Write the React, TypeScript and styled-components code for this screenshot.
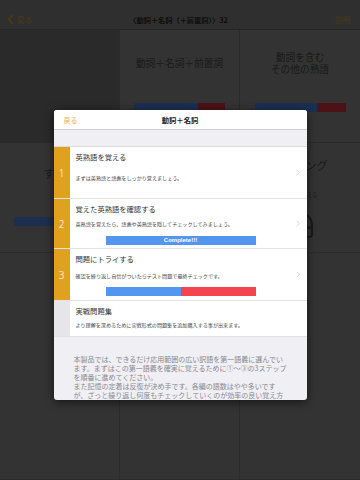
import styled, { createGlobalStyle } from "styled-components";
import { Headphones } from "lucide-react";

const GlobalStyle = createGlobalStyle`
  *, *::before, *::after { box-sizing: border-box; }
  body {
    margin: 0;
    background: #333;
    font-family: "Noto Sans CJK JP", "Noto Sans", sans-serif;
  }
`;

const JP = `"Noto Sans CJK JP", "Noto Sans", sans-serif`;

const steps = [
  {
    no: "1",
    title: "英熟語を覚える",
    desc: "まずは英熟語と語義をしっかり覚えましょう。",
    h: 52,
    gap: 11,
  },
  {
    no: "2",
    title: "覚えた英熟語を確認する",
    desc: "英熟語を覚えたら、語義や英熟語を隠してチェックしてみましょう。",
    h: 50,
    gap: 5,
    bar: "complete",
  },
  {
    no: "3",
    title: "問題にトライする",
    desc: "確認を繰り返し自信がついたらテスト問題で最終チェックです。",
    h: 52,
    gap: 7,
    bar: "split",
  },
  {
    no: "",
    title: "実戦問題集",
    desc: "より理解を深めるために実戦形式の問題集を追加購入する事が出来ます。",
    h: 36,
    gap: 4,
  },
];

const Chevron = ({ color, w, h }: { color: string; w: number; h: number }) => (
  <svg width={w} height={h} viewBox="0 0 6 10" fill="none">
    <polyline points="1,1 5,5 1,9" stroke={color} strokeWidth="1.1" />
  </svg>
);

const BackChevron = () => (
  <svg width="7" height="11" viewBox="0 0 7 11" fill="none">
    <polyline points="6,1 1.5,5.5 6,10" stroke="#d8a23a" strokeWidth="1.6" />
  </svg>
);

export default function App() {
  return (
    <>
      <GlobalStyle />
      <Screen>
        <NavBar>
          <NavBack>
            <BackChevron />
            戻る
          </NavBack>
          <NavTitle>〈動詞＋名詞（＋前置詞）〉32</NavTitle>
          <NavAction>説明</NavAction>
        </NavBar>

        <Grid>
          <Cell $tone="#7a7a7a" />
          <Cell>
            <CellLabel $h={66}>動詞＋名詞＋前置詞</CellLabel>
            <Bar $w={91} $mt={7}>
              <Seg $c="#4f86e8" style={{ flex: 64 }} />
              <Seg $c="#d9343c" style={{ flex: 27 }} />
            </Bar>
          </Cell>
          <Cell>
            <CellLabel $h={66}>
              動詞を含む
              <br />
              その他の熟語
            </CellLabel>
            <Bar $w={91} $mt={7}>
              <Seg $c="#4f86e8" style={{ flex: 62 }} />
              <Seg $c="#d9343c" style={{ flex: 29 }} />
            </Bar>
          </Cell>

          <Cell>
            <CellLabel $h={60} $size={11}>すべて</CellLabel>
            <Bar $w={91} $mt={14}>
              <Seg $c="#4f86e8" style={{ flex: 1 }} />
            </Bar>
          </Cell>
          <Cell>
            <CellLabel $h={60} $size={11}>テスト</CellLabel>
          </Cell>
          <Cell>
            <CellLabel $h={44} $size={11}>リスニング</CellLabel>
            <CellSub>聞いて覚える</CellSub>
            <IconWrap>
              <Headphones size={32} color="#4a4a4a" strokeWidth={1.6} />
            </IconWrap>
          </Cell>

          <Cell />
          <Cell />
          <Cell />
        </Grid>

        <Overlay>
          <Modal>
            <ModalHeader>
              <ModalBack>戻る</ModalBack>
              <ModalTitle>動詞＋名詞</ModalTitle>
              <span />
            </ModalHeader>
            <Band />
            {steps.map((s) => (
              <StepRow key={s.title} $h={s.h}>
                <StepNum $active={s.no !== ""}>{s.no}</StepNum>
                <StepBody>
                  <StepTitle>{s.title}</StepTitle>
                  <StepDesc $gap={s.gap}>{s.desc}</StepDesc>
                  {s.bar === "complete" && (
                    <StepBar $mt={8} $h={8.5}>
                      <Seg $c="#5296f0" style={{ flex: 1 }}>
                        Complete!!!
                      </Seg>
                    </StepBar>
                  )}
                  {s.bar === "split" && (
                    <StepBar $mt={7} $h={9}>
                      <Seg $c="#5296f0" style={{ flex: 1 }} />
                      <Seg $c="#f2454f" style={{ flex: 1 }} />
                    </StepBar>
                  )}
                </StepBody>
                {s.no !== "" && (
                  <StepChevron>
                    <Chevron color="#c7c7cc" w={4} h={7} />
                  </StepChevron>
                )}
              </StepRow>
            ))}
            <Note>
              本製品では、できるだけ応用範囲の広い訳語を第一語義に選んでいます。まずはこの第一語義を確実に覚えるために①〜③の3ステップを順番に進めてください。
              <br />
              また記憶の定着は反復が決め手です。各編の語数はやや多いですが、ざっと繰り返し何度もチェックしていくのが効率の良い覚え方です。
            </Note>
          </Modal>
        </Overlay>
      </Screen>
    </>
  );
}

const Screen = styled.div`
  position: relative;
  width: 360px;
  height: 480px;
  overflow: hidden;
  background: #929292;
`;

const NavBar = styled.div`
  height: 30px;
  padding: 10px 10px 0 7px;
  background: #878787;
  border-bottom: 1px solid #6e6e6e;
  display: grid;
  grid-template-columns: 60px 1fr 60px;
  align-items: center;
  font-family: ${JP};
  font-size: 7.5px;
`;

const NavBack = styled.div`
  display: flex;
  align-items: center;
  gap: 3px;
  color: #d8a23a;
`;

const NavTitle = styled.div`
  text-align: center;
  font-weight: 700;
  font-size: 7.2px;
  color: #2a2a2a;
`;

const NavAction = styled.div`
  text-align: right;
  color: #d8a23a;
`;

const Grid = styled.div`
  display: grid;
  grid-template-columns: repeat(3, 120px);
  grid-template-rows: 113px 110px 1fr;
  height: 450px;
`;

const Cell = styled.div<{ $tone?: string }>`
  display: flex;
  flex-direction: column;
  align-items: center;
  background: ${(p) => p.$tone ?? "#929292"};
  border-right: 1px solid #7c7c7c;
  border-bottom: 1px solid #7c7c7c;
  &:nth-child(3n) {
    border-right: none;
  }
`;

const CellLabel = styled.div<{ $h: number; $size?: number }>`
  height: ${(p) => p.$h}px;
  display: flex;
  align-items: center;
  justify-content: center;
  text-align: center;
  font-family: ${JP};
  font-size: ${(p) => p.$size ?? 9.7}px;
  line-height: 12px;
  color: #4a4a4a;
`;

const CellSub = styled.div`
  font-family: ${JP};
  font-size: 6px;
  line-height: 16px;
  color: #5a5a5a;
`;

const IconWrap = styled.div`
  margin-top: 6px;
  display: flex;
`;

const Bar = styled.div<{ $w: number; $mt: number }>`
  display: flex;
  width: ${(p) => p.$w}px;
  height: 9px;
  margin-top: ${(p) => p.$mt}px;
`;

const Seg = styled.div<{ $c: string }>`
  background: ${(p) => p.$c};
  display: flex;
  align-items: center;
  justify-content: center;
  color: #fff;
  font-family: "Liberation Sans", Arial, sans-serif;
  font-weight: 700;
  font-size: 6px;
`;

const Overlay = styled.div`
  position: absolute;
  inset: 0;
  background: rgba(0, 0, 0, 0.65);
  display: flex;
  justify-content: center;
  align-items: flex-start;
  padding-top: 110px;
`;

const Modal = styled.div`
  width: 253px;
  height: 290px;
  overflow: hidden;
  background: #efeff4;
  border-radius: 3px;
  box-shadow: 0 2px 10px rgba(0, 0, 0, 0.6);
  font-family: ${JP};
`;

const ModalHeader = styled.div`
  height: 20px;
  padding: 0 10px;
  background: #fff;
  border-bottom: 1px solid #cfcfd4;
  display: grid;
  grid-template-columns: 40px 1fr 40px;
  align-items: center;
`;

const ModalBack = styled.div`
  font-size: 7px;
  color: #f0b04a;
`;

const ModalTitle = styled.div`
  text-align: center;
  font-size: 7.3px;
  font-weight: 700;
  color: #222;
`;

const Band = styled.div`
  height: 17px;
  background: #efeff4;
  border-bottom: 1px solid #dcdce0;
`;

const StepRow = styled.div<{ $h: number }>`
  display: flex;
  min-height: ${(p) => p.$h}px;
  background: #fff;
  border-bottom: 1px solid #e3e3e6;
`;

const StepNum = styled.div<{ $active: boolean }>`
  width: 16px;
  flex: none;
  display: flex;
  align-items: center;
  justify-content: center;
  background: ${(p) => (p.$active ? "#e0a11e" : "#e6e6e8")};
  color: #fff;
  font-family: "Noto Sans", sans-serif;
  font-weight: 300;
  font-size: 10px;
`;

const StepBody = styled.div`
  flex: 1;
  padding: 4px 0 0 6px;
`;

const StepTitle = styled.div`
  font-size: 7.3px;
  line-height: 12px;
  color: #333;
`;

const StepDesc = styled.div<{ $gap: number }>`
  margin-top: ${(p) => p.$gap}px;
  font-size: 5.1px;
  line-height: 8px;
  color: #444;
  white-space: nowrap;
`;

const StepBar = styled.div<{ $mt: number; $h: number }>`
  display: flex;
  width: 150px;
  height: ${(p) => p.$h}px;
  margin: ${(p) => p.$mt}px 0 0 30px;
`;

const StepChevron = styled.div`
  width: 14px;
  flex: none;
  display: flex;
  align-items: center;
  padding-left: 3px;
`;

const Note = styled.p`
  margin: 0;
  padding: 18px 18px 0 20px;
  font-size: 7px;
  line-height: 9px;
  color: #8a8a8f;
`;
